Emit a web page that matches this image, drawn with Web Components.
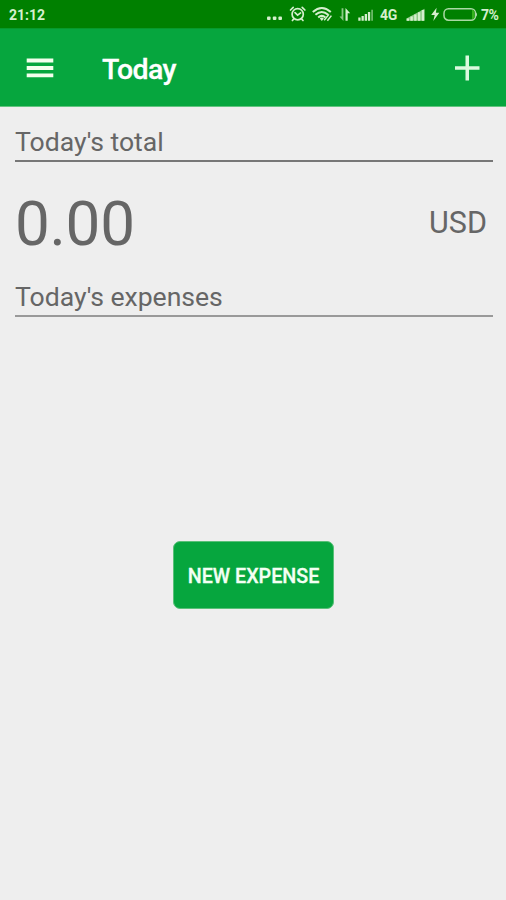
<!DOCTYPE html>
<html lang="en">
<head>
<meta charset="utf-8">
<title>Today</title>
<style>
html, body{
    margin: 0;
    height: 100%;
}
body{
    font-family: Roboto, "Liberation Sans", sans-serif;
    background-color: #eee;
    color: #666;
    overflow: hidden;
}
</style>
</head>
<body>
<expense-app>
  <status-bar slot="status" time="21:12" network="4G" battery="7%"></status-bar>
  <app-bar slot="bar">Today</app-bar>
  <section-title class="total">Today's total</section-title>
  <total-amount currency="USD">0.00</total-amount>
  <section-title class="expenses" light>Today's expenses</section-title>
  <action-button slot="action">New expense</action-button>
</expense-app>

<script>
function attach(element, html){
    const template = document.createElement('template');
    template.innerHTML = html;
    element.attachShadow({ mode: 'open' });
    element.shadowRoot.appendChild(template.content.cloneNode(true));
}

class ExpenseApp extends HTMLElement{
    constructor(){
        super();
        attach(this, `
<style>
:host{
    display: flex;
    flex-direction: column;
    height: 900px;
}
.content{
    padding: 14px 13px 0 15px;
}
.action{
    flex: 1;
    display: flex;
    justify-content: center;
    align-items: flex-start;
    padding-top: 224px;
    padding-left: 1px;
}
</style>
<slot name="status"></slot>
<slot name="bar"></slot>
<div class="content"><slot></slot></div>
<div class="action"><slot name="action"></slot></div>
`);
    }
}

class StatusBar extends HTMLElement{
    constructor(){
        super();
        attach(this, `
<style>
:host{
    display: flex;
    align-items: center;
    box-sizing: border-box;
    height: 28px;
    padding: 2px 7px 0 9px;
    background-color: #008000;
    color: #d5efcd;
    font-size: 14px;
    font-weight: 700;
    line-height: 26px;
}
svg{
    display: block;
    flex: none;
    fill: currentColor;
}
.line{
    fill: none;
    stroke: currentColor;
}
.time{
    flex: 1;
}
.network{
    width: 20px;
    margin: 0 6px 0 6px;
    letter-spacing: -0.2px;
}
.battery{
    width: 18px;
    margin-left: 3px;
    letter-spacing: -0.6px;
    white-space: nowrap;
}
</style>
<span class="time"></span>
<svg width="18" height="20" viewBox="0 0 18 20">
  <rect x="1" y="11.5" width="3.6" height="3.4" rx="1"/>
  <rect x="6.8" y="11.5" width="3.6" height="3.4" rx="1"/>
  <rect x="12.4" y="11.5" width="3.6" height="3.4" rx="1"/>
</svg>
<svg width="18" height="20" viewBox="0 0 18 20" style="margin-left:5px">
  <g class="line" stroke-width="1.7" stroke-linecap="round">
    <circle cx="8.7" cy="9.2" r="5.6"/>
    <path d="M1.5 5L4.2 2.4M13.2 2.4L15.9 5M6 7.7L8.6 10.1L11.6 7.9M4.6 14.2L3.4 15.5M12.8 14.2L14 15.5"/>
  </g>
</svg>
<svg width="22" height="20" viewBox="0 0 22 20" style="margin-left:5px">
  <g class="line" stroke-width="2">
    <path d="M.8 7Q9.8-.9 18.8 7M3.4 9.8Q9.8 4.2 16.2 9.8M6.2 12.4Q9.8 9.3 13.4 12.4"/>
    <path stroke-width="1.5" d="M12.2 15.2L16.9 9.4M15.4 15.8L19.4 10.6"/>
  </g>
  <path d="M7.8 13.4Q9.8 11.8 11.8 13.4L9.8 16Z"/>
</svg>
<svg width="12" height="20" viewBox="0 0 12 20" style="margin-left:5px">
  <path opacity=".65" d="M2.6 3.3H4.4V16L.5 11.5H2.6Z"/>
  <path d="M6.5 3L11.2 8.2H8.7V15.8H6.5Z"/>
</svg>
<svg width="16" height="20" viewBox="0 0 16 20" style="margin-left:7px">
  <path d="M.3 12.5H2.6V15.8H.3ZM3.5 11H5.8V15.8H3.5ZM6.7 9H9V15.8H6.7ZM9.9 7H12.2V15.8H9.9Z"/>
  <path opacity=".5" d="M13.2 4.8H15V15.8H13.2Z"/>
</svg>
<span class="network"></span>
<svg width="20" height="20" viewBox="0 0 20 20">
  <path opacity=".65" d="M.5 15.8V13.5L18.5 3.7V15.8Z"/>
  <path d="M.7 13.5H3V15.8H.7ZM4.4 11.6H6.8V15.8H4.4ZM8.2 9.5H10.5V15.8H8.2ZM12 7.3H14.3V15.8H12ZM15.8 5H18.2V15.8H15.8Z"/>
</svg>
<svg width="9" height="20" viewBox="0 0 9 20" style="margin-left:5px">
  <path d="M5.6 2.8L.2 10H3.7L2.3 16L8.3 7.8H4.9Z"/>
</svg>
<svg width="35" height="20" viewBox="0 0 35 20" style="margin-left:3px">
  <rect class="line" x="1" y="3.8" width="31.5" height="11.4" rx="4.5" stroke-width="1.5" opacity=".8"/>
  <path d="M29 5H30.2Q31.5 5.7 31.5 7.7V11.3Q31.5 13.3 30.2 14H29Z" fill="#35b21c"/>
  <path d="M33 7.2Q35 9.5 33 11.8Z" opacity=".8"/>
</svg>
<span class="battery"></span>
`);
        for (const name of ['time', 'network', 'battery']) {
            this.shadowRoot.querySelector('.' + name).textContent = this.getAttribute(name);
        }
    }
}

class AppBar extends HTMLElement{
    constructor(){
        super();
        attach(this, `
<style>
:host{
    display: flex;
    align-items: center;
    box-sizing: border-box;
    height: 79px;
    padding: 0 25px 0 26px;
    background-color: #06a63e;
    border-top: 1px solid #079a2b;
    border-bottom: 1px solid #62c47f;
    color: #fff;
}
h1{
    flex: 1;
    margin: 5px 0 0 48px;
    font-size: 28.5px;
    font-weight: 500;
    line-height: 34px;
    letter-spacing: -0.55px;
    -webkit-text-stroke: 0.3px;
}
svg{
    display: block;
}
</style>
<svg width="28" height="20" viewBox="0 0 28 20">
  <path fill="#f3ffed" d="M.7 .5H27.3V4.5H.7ZM.7 8H27.3V12H.7ZM.7 15.5H27.3V19.2H.7Z"/>
</svg>
<h1><slot></slot></h1>
<svg width="28" height="28" viewBox="0 0 28 28">
  <path fill="#dcf9df" d="M12.5 1.5H16V12.3H26.5V15.8H16V26.5H12.5V15.8H2V12.3H12.5Z"/>
</svg>
`);
    }
}

class SectionTitle extends HTMLElement{
    constructor(){
        super();
        attach(this, `
<style>
:host{
    display: block;
    box-sizing: border-box;
    height: 41px;
    border-bottom: 2px solid #777;
    font-size: 26.6px;
    line-height: 41px;
    letter-spacing: -0.03px;
}
:host([light]){
    border-bottom-color: #999;
}
h2{
    margin: 0;
    font: inherit;
}
</style>
<h2><slot></slot></h2>
`);
    }
}

class TotalAmount extends HTMLElement{
    constructor(){
        super();
        attach(this, `
<style>
:host{
    display: flex;
    align-items: center;
    justify-content: space-between;
    height: 114px;
    padding-right: 6px;
}
.amount{
    font-size: 62px;
    line-height: 72px;
    padding-top: 9px;
    letter-spacing: -0.3px;
}
.currency{
    font-size: 30.5px;
    line-height: 36px;
    padding-top: 7px;
}
</style>
<span class="amount"><slot></slot></span>
<span class="currency"></span>
`);
        this.shadowRoot.querySelector('.currency').textContent = this.getAttribute('currency');
    }
}

class ActionButton extends HTMLElement{
    constructor(){
        super();
        attach(this, `
<style>
:host{
    display: block;
}
button{
    display: block;
    width: 161px;
    height: 68px;
    padding: 2px 0 0;
    border: 1px solid #59c078;
    border-radius: 7px;
    background-color: #06a63e;
    color: #f3fff3;
    font: 500 19.7px Roboto, "Liberation Sans", sans-serif;
    -webkit-text-stroke: 0.3px;
    text-transform: uppercase;
    white-space: nowrap;
}
</style>
<button type="button"><slot></slot></button>
`);
    }
}

customElements.define('expense-app', ExpenseApp);
customElements.define('status-bar', StatusBar);
customElements.define('app-bar', AppBar);
customElements.define('section-title', SectionTitle);
customElements.define('total-amount', TotalAmount);
customElements.define('action-button', ActionButton);
</script>
</body>
</html>
